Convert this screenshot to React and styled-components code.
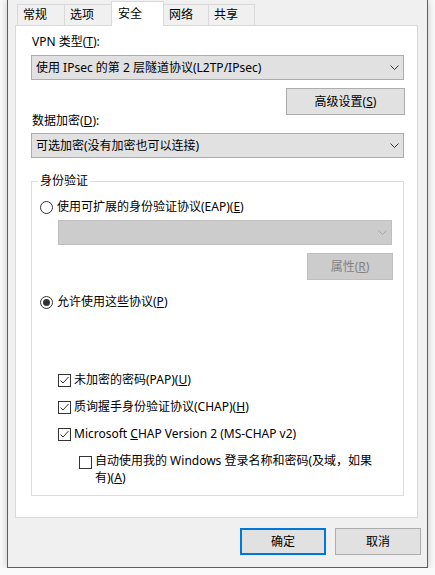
import React from 'react';
import styled, { createGlobalStyle } from 'styled-components';

const GlobalStyle = createGlobalStyle`
  html, body {
    margin: 0;
    padding: 0;
    background: #fafafa;
  }
  body {
    font-family: "Noto Sans", "Noto Sans CJK SC", sans-serif;
    font-size: 12px;
    color: #000;
  }
`;

const tabs = [
    { label: '常规', width: 48 },
    { label: '选项', width: 48 },
    { label: '安全', width: 53, active: true },
    { label: '网络', width: 46 },
    { label: '共享', width: 47 },
];

const Chevron = ({ color }) => (
    <svg width="9" height="5" viewBox="0 0 9 5">
        <polyline points="0.5,0.5 4.5,4.5 8.5,0.5" fill="none" stroke={color} strokeWidth="1" />
    </svg>
);

const CheckMark = () => (
    <svg width="11" height="11" viewBox="0 0 11 11">
        <polyline points="1.5,5.5 4,8 9.5,2" fill="none" stroke="#333" strokeWidth="1" />
    </svg>
);

const App = () => {
    return (
        <>
            <GlobalStyle />
            <Window>
                <TabStrip>
                    {tabs.map(tab => (
                        <Tab key={tab.label} $w={tab.width} $active={tab.active}>
                            {tab.label}
                        </Tab>
                    ))}
                </TabStrip>

                <Panel>
                    <FieldLabel>VPN 类型(<u>T</u>):</FieldLabel>
                    <Select $top={5}>
                        <span>使用 IPsec 的第 2 层隧道协议(L2TP/IPsec)</span>
                        <Chevron color="#333" />
                    </Select>

                    <ButtonRow $width={374} $top={8}>
                        <Button $width={119}>高级设置(<u>S</u>)</Button>
                    </ButtonRow>

                    <FieldLabel $top={-2}>数据加密(<u>D</u>):</FieldLabel>
                    <Select $top={4}>
                        <span>可选加密(没有加密也可以连接)</span>
                        <Chevron color="#333" />
                    </Select>

                    <GroupBox>
                        <Legend>身份验证</Legend>

                        <OptionRow $top={10}>
                            <Radio />
                            <span>使用可扩展的身份验证协议(EAP)(<u>E</u>)</span>
                        </OptionRow>

                        <Select $top={5} $left={18} $width={334} $disabled>
                            <span />
                            <Chevron color="#a6a6a6" />
                        </Select>

                        <ButtonRow $width={353} $top={8}>
                            <Button $width={86} $disabled>属性(<u>R</u>)</Button>
                        </ButtonRow>

                        <OptionRow $top={14}>
                            <Radio $checked />
                            <span>允许使用这些协议(<u>P</u>)</span>
                        </OptionRow>

                        <OptionRow $top={62} $left={18}>
                            <CheckBox><CheckMark /></CheckBox>
                            <span>未加密的密码(PAP)(<u>U</u>)</span>
                        </OptionRow>

                        <OptionRow $top={11} $left={18}>
                            <CheckBox><CheckMark /></CheckBox>
                            <span>质询握手身份验证协议(CHAP)(<u>H</u>)</span>
                        </OptionRow>

                        <OptionRow $top={11} $left={18}>
                            <CheckBox><CheckMark /></CheckBox>
                            <span>Microsoft <u>C</u>HAP Version 2 (MS-CHAP v2)</span>
                        </OptionRow>

                        <WrapRow>
                            <CheckBox />
                            <span>自动使用我的 Windows 登录名称和密码(及域，如果<br />有)(<u>A</u>)</span>
                        </WrapRow>
                    </GroupBox>
                </Panel>

                <Footer>
                    <DialogButton $default>确定</DialogButton>
                    <DialogButton>取消</DialogButton>
                </Footer>
            </Window>
        </>
    );
};

const Window = styled.div`
    box-sizing: border-box;
    width: 421px;
    height: 568px;
    margin-left: 7px;
    background: #f0f0f0;
    border: 1px solid #596064;
    border-top: none;
    box-shadow: 0 0 8px rgba(0, 0, 0, 0.22);
    display: flex;
    flex-direction: column;
`;

const TabStrip = styled.div`
    height: 25px;
    display: flex;
    align-items: flex-end;
    padding-left: 10px;
`;

const Tab = styled.div`
    box-sizing: border-box;
    width: ${p => p.$w}px;
    height: ${p => (p.$active ? 25 : 21)}px;
    margin-left: -1px;
    margin-bottom: ${p => (p.$active ? -1 : 0)}px;
    padding: ${p => (p.$active ? '0 0 1px 6px' : '0 0 1px 5px')};
    border: 1px solid #d9d9d9;
    border-bottom: none;
    background: ${p => (p.$active ? '#fff' : '#f0f0f0')};
    display: flex;
    align-items: center;
    line-height: 16px;
    position: relative;
    z-index: ${p => (p.$active ? 1 : 0)};
`;

const Panel = styled.div`
    box-sizing: border-box;
    width: 403px;
    margin-left: 7px;
    background: #fff;
    border: 1px solid #d9d9d9;
    padding: 8px 0 21px 15px;
`;

const FieldLabel = styled.div`
    line-height: 16px;
    margin-top: ${p => p.$top || 0}px;
    padding-left: 1px;

    u {
        text-decoration-thickness: 1px;
    }
`;

const Select = styled.div`
    box-sizing: border-box;
    width: ${p => p.$width || 373}px;
    height: 25px;
    margin-top: ${p => p.$top || 0}px;
    margin-left: ${p => p.$left || 0}px;
    padding: 0 4px 0 4px;
    display: flex;
    align-items: center;
    justify-content: space-between;
    background: ${p => (p.$disabled ? '#cccccc' : '#e1e1e1')};
    border: 1px solid ${p => (p.$disabled ? '#bfbfbf' : '#adadad')};
    line-height: 16px;

    svg {
        flex-shrink: 0;
    }
`;

const ButtonRow = styled.div`
    width: ${p => p.$width}px;
    margin-top: ${p => p.$top || 0}px;
    display: flex;
    justify-content: flex-end;
`;

const Button = styled.div`
    box-sizing: border-box;
    width: ${p => p.$width}px;
    height: 27px;
    display: flex;
    align-items: center;
    justify-content: center;
    background: ${p => (p.$disabled ? '#cccccc' : '#e1e1e1')};
    border: 1px solid ${p => (p.$disabled ? '#bfbfbf' : '#adadad')};
    color: ${p => (p.$disabled ? '#838383' : '#000')};
    line-height: 16px;
`;

const GroupBox = styled.fieldset`
    box-sizing: border-box;
    width: 373px;
    min-width: 0;
    margin: 15px 0 0 0;
    padding: 0 0 9px 8px;
    border: 1px solid #dcdcdc;
`;

const Legend = styled.legend`
    padding: 0 2px;
    margin-left: -2px;
    line-height: 16px;
`;

const OptionRow = styled.div`
    display: flex;
    align-items: center;
    gap: 4px;
    line-height: 16px;
    margin-top: ${p => p.$top || 0}px;
    margin-left: ${p => p.$left || 0}px;
`;

const WrapRow = styled.div`
    display: flex;
    align-items: flex-start;
    gap: 4px;
    line-height: 17px;
    margin-top: 10px;
    margin-left: 39px;

    > div {
        margin-top: 4px;
    }
`;

const Radio = styled.div`
    box-sizing: border-box;
    width: 13px;
    height: 13px;
    flex-shrink: 0;
    border: 1px solid #333;
    border-radius: 50%;
    background: #fff;
    display: flex;
    align-items: center;
    justify-content: center;

    &::after {
        content: '';
        display: ${p => (p.$checked ? 'block' : 'none')};
        width: 7px;
        height: 7px;
        border-radius: 50%;
        background: #333;
    }
`;

const CheckBox = styled.div`
    box-sizing: border-box;
    width: 13px;
    height: 13px;
    flex-shrink: 0;
    border: 1px solid #333;
    background: #fff;
    display: flex;
    align-items: center;
    justify-content: center;
    margin-right: -1px;
`;

const Footer = styled.div`
    display: flex;
    justify-content: flex-end;
    gap: 9px;
    margin-top: 10px;
    padding-right: 6px;
`;

const DialogButton = styled.div`
    box-sizing: border-box;
    width: 86px;
    height: 27px;
    display: flex;
    align-items: center;
    justify-content: center;
    background: #e1e1e1;
    border: ${p => (p.$default ? '2px solid #0078d7' : '1px solid #adadad')};
    line-height: 16px;
`;

export default App;
